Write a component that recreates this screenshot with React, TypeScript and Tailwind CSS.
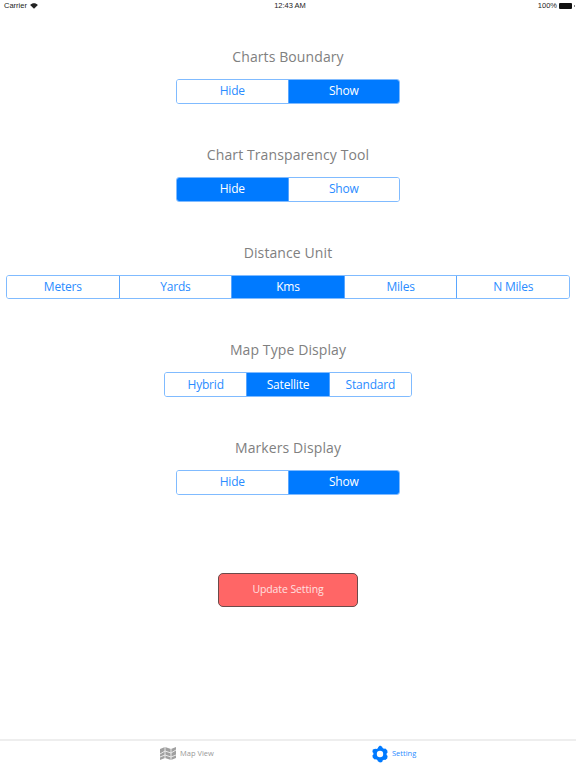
import React from "react";

interface SegmentedProps {
  options: string[];
  selected: string;
  widthClass: string;
}

const Segmented: React.FC<SegmentedProps> = ({ options, selected, widthClass }) => (
  <div className={`flex h-[24.75px] rounded-[3px] border border-[#80bbff] overflow-hidden ${widthClass}`}>
    {options.map((option, index) => (
      <div
        key={option}
        className={`flex-1 flex items-center justify-center text-[12px] tracking-[-0.2px] ${
          option === selected ? "bg-[#007aff] text-white" : "bg-white text-[#2a8cff]"
        } ${index > 0 ? "border-l border-[#59a6ff]" : ""}`}
      >
        {option}
      </div>
    ))}
  </div>
);

const Section: React.FC<{ title: string; children: React.ReactNode }> = ({ title, children }) => (
  <div className="flex flex-col items-center">
    <div className="h-5 leading-5 text-[14px] tracking-[0.1px] text-[#808080]">{title}</div>
    <div className="mt-3 w-full flex justify-center">{children}</div>
  </div>
);

const MapIcon = () => (
  <svg width="18" height="15" viewBox="0 0 18 15" fill="none">
    <path d="M1 3l5-2 6 2 5-2v11l-5 2-6-2-5 2z" fill="#a0a0a0" />
    <path d="M1 8l5-3 6 2 5-3M1 11l5-2 6 2 5-2M6 1v11M12 3v11" stroke="#f0f0f0" strokeWidth="0.9" />
  </svg>
);

const GearIcon = () => (
  <svg width="18" height="18" viewBox="0 0 18 18">
    <path
      d="M9 .5l2.2 1.2.4 1.3 1.4.8 1.3-.3 1.9 1.7.4 2.3-1 1 0 1.6 1 1-.4 2.3-1.9 1.7-1.3-.3-1.4.8-.4 1.3L9 17.5l-2.2-1.2-.4-1.3-1.4-.8-1.3.3-1.9-1.7-.4-2.3 1-1 0-1.6-1-1 .4-2.3L4.2 3.8l1.3.3 1.4-.8.4-1.3z"
      fill="#007aff"
    />
    <circle cx="9" cy="9" r="3.2" fill="white" />
  </svg>
);

export default function App() {
  return (
    <div className="w-[576px] h-[768px] bg-white flex flex-col font-['Open_Sans',sans-serif]">
      <div className="relative h-[12px] flex items-center justify-between pl-[4px] pr-[1px] text-[7.5px] leading-none text-[#222] font-['Liberation_Sans',sans-serif]">
        <div className="flex items-center gap-[3px]">
          <span>Carrier</span>
          <svg width="8" height="6" viewBox="0 0 9 7">
            <path d="M4.5 6.8L0 2.2C2.5-.4 6.5-.4 9 2.2z" fill="#222" />
          </svg>
        </div>
        <span className="absolute left-0 right-0 pl-[4px] text-center">12:43 AM</span>
        <div className="flex items-center gap-[2px]">
          <span>100%</span>
          <div className="w-[13px] h-[6px] rounded-[1px] bg-[#111]" />
          <div className="w-[1px] h-[2px] bg-[#888]" />
        </div>
      </div>

      <div className="flex flex-col gap-[41px] pt-[35px]">
        <Section title="Charts Boundary">
          <Segmented options={["Hide", "Show"]} selected="Show" widthClass="w-[224px]" />
        </Section>
        <Section title="Chart Transparency Tool">
          <Segmented options={["Hide", "Show"]} selected="Hide" widthClass="w-[224px]" />
        </Section>
        <Section title="Distance Unit">
          <Segmented
            options={["Meters", "Yards", "Kms", "Miles", "N Miles"]}
            selected="Kms"
            widthClass="w-[564px]"
          />
        </Section>
        <Section title="Map Type Display">
          <Segmented options={["Hybrid", "Satellite", "Standard"]} selected="Satellite" widthClass="w-[248px]" />
        </Section>
        <Section title="Markers Display">
          <Segmented options={["Hide", "Show"]} selected="Show" widthClass="w-[224px]" />
        </Section>
      </div>

      <div className="flex justify-center mt-[78.5px]">
        <div className="w-[140px] h-[34px] flex items-center justify-center rounded-[5px] border border-[#6b4a4a] bg-[#ff6666] text-[#ffe0e0] text-[10.5px] tracking-[-0.1px]">
          Update Setting
        </div>
      </div>

      <div className="mt-auto h-[29px] pb-[2px] border-t-2 border-[#eeeeee] flex">
        <div className="w-1/2 flex items-center pl-[159px] gap-[3px] text-[7.5px] text-[#9a9a9a]">
          <MapIcon />
          <span>Map View</span>
        </div>
        <div className="w-1/2 flex items-center pl-[83px] gap-[3px] text-[7.5px] text-[#2a8cff]">
          <GearIcon />
          <span>Setting</span>
        </div>
      </div>
    </div>
  );
}
